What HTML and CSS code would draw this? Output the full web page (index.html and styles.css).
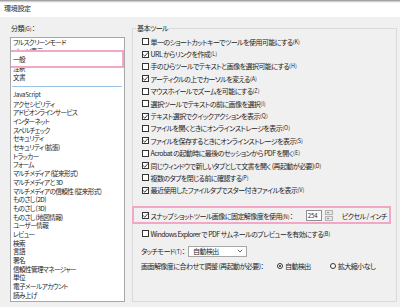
FILE: index.html
```html
<!DOCTYPE html>
<html lang="ja">
<head>
    <meta charset="UTF-8">
    <title>環境設定</title>
    <link rel="stylesheet" href="styles.css">
</head>
<body>

<div class="titlebar">環境設定</div>

<div class="main">
    <div class="side">
        <div class="side-label">分類<span class="key">(G)</span>：</div>
        <div class="listbox">
            <div class="item">フルスクリーンモード</div>
            <div class="item">ページ表示</div>
            <div class="item current">一般</div>
            <div class="item">注釈</div>
            <div class="item">文書</div>
            <div class="sep"></div>
            <div class="item latin">JavaScript</div>
            <div class="item">アクセシビリティ</div>
            <div class="item">アドビオンラインサービス</div>
            <div class="item">インターネット</div>
            <div class="item">スペルチェック</div>
            <div class="item">セキュリティ</div>
            <div class="item">セキュリティ (拡張)</div>
            <div class="item">トラッカー</div>
            <div class="item">フォーム</div>
            <div class="item">マルチメディア (従来形式)</div>
            <div class="item">マルチメディアと 3D</div>
            <div class="item">マルチメディアの信頼性 (従来形式)</div>
            <div class="item">ものさし (2D)</div>
            <div class="item">ものさし (3D)</div>
            <div class="item">ものさし (地図情報)</div>
            <div class="item">ユーザー情報</div>
            <div class="item">レビュー</div>
            <div class="item">検索</div>
            <div class="item">言語</div>
            <div class="item">署名</div>
            <div class="item">信頼性管理マネージャー</div>
            <div class="item">単位</div>
            <div class="item">電子メールアカウント</div>
            <div class="item">読み上げ</div>
        </div>
    </div>

    <fieldset class="group">
        <legend>基本ツール</legend>

        <div class="opt"><span class="cb"></span>単一のショートカットキーでツールを使用可能にする<span class="key">(K)</span></div>
        <div class="opt"><span class="cb checked"><svg viewBox="0 0 7 7"><path d="M1.2 3.6 L2.8 5.2 L5.9 1.6" /></svg></span>URL からリンクを作成<span class="key">(L)</span></div>
        <div class="opt"><span class="cb"></span>手のひらツールでテキストと画像を選択可能にする<span class="key">(H)</span></div>
        <div class="opt"><span class="cb checked"><svg viewBox="0 0 7 7"><path d="M1.2 3.6 L2.8 5.2 L5.9 1.6" /></svg></span>アーティクルの上でカーソルを変える<span class="key">(A)</span></div>
        <div class="opt"><span class="cb"></span>マウスホイールでズームを可能にする<span class="key">(Z)</span></div>
        <div class="opt"><span class="cb"></span>選択ツールでテキストの前に画像を選択<span class="key">(I)</span></div>
        <div class="opt"><span class="cb checked"><svg viewBox="0 0 7 7"><path d="M1.2 3.6 L2.8 5.2 L5.9 1.6" /></svg></span>テキスト選択でクイックアクションを表示<span class="key">(Q)</span></div>
        <div class="opt"><span class="cb"></span>ファイルを開くときにオンラインストレージを表示<span class="key">(O)</span></div>
        <div class="opt"><span class="cb checked"><svg viewBox="0 0 7 7"><path d="M1.2 3.6 L2.8 5.2 L5.9 1.6" /></svg></span>ファイルを保存するときにオンラインストレージを表示<span class="key">(S)</span></div>
        <div class="opt"><span class="cb"></span>Acrobat の起動時に最後のセッションから PDF を開く<span class="key">(E)</span></div>
        <div class="opt"><span class="cb checked"><svg viewBox="0 0 7 7"><path d="M1.2 3.6 L2.8 5.2 L5.9 1.6" /></svg></span>同じウィンドウで新しいタブとして文書を開く (再起動が必要)<span class="key">(D)</span></div>
        <div class="opt"><span class="cb"></span>複数のタブを閉じる前に確認する<span class="key">(P)</span></div>
        <div class="opt"><span class="cb checked"><svg viewBox="0 0 7 7"><path d="M1.2 3.6 L2.8 5.2 L5.9 1.6" /></svg></span>最近使用したファイルタブでスター付きファイルを表示<span class="key">(V)</span></div>

        <div class="opt snap">
            <span class="cb checked"><svg viewBox="0 0 7 7"><path d="M1.2 3.6 L2.8 5.2 L5.9 1.6" /></svg></span>
            <span class="snap-label">スナップショットツール画像に固定解像度を使用<span class="key">(N)</span>：</span>
            <span class="spin"><span class="spin-value">254</span></span>
            <span class="spin-btns"><span class="up"></span><span class="down"></span></span>
            <span class="unit">ピクセル / インチ</span>
        </div>

        <div class="opt explorer"><span class="cb"></span>Windows Explorer で PDF サムネールのプレビューを有効にする<span class="key">(B)</span></div>

        <div class="opt touch">
            <span class="touch-label">タッチモード<span class="key">(T)</span>：</span>
            <span class="select">自動検出<svg class="chev" viewBox="0 0 6 4"><path d="M0.8 0.8 L3 3 L5.2 0.8" /></svg></span>
        </div>

        <div class="opt scale">
            <span class="scale-label">画面解像度に合わせて調整 (再起動が必要)：</span>
            <span class="radio on"></span><span>自動検出</span>
            <span class="radio second"></span><span>拡大縮小なし</span>
        </div>
    </fieldset>
</div>

</body>
</html>
```

FILE: styles.css
```css
html, body {
    margin: 0;
    padding: 0;
}
body {
    width: 400px;
    height: 307px;
    overflow: hidden;
    background-color: #f0f0f0;
    font-family: "Noto Sans CJK JP", "Noto Sans", sans-serif;
    font-feature-settings: "palt";
    font-size: 7px;
    color: #1e1e1e;
}
.titlebar {
    height: 17px;
    line-height: 17px;
    padding-left: 4px;
    background: linear-gradient(#8c8c8c, #e6e6e6 2px, #ffffff 3px);
    letter-spacing: -0.3px;
}
.key {
    font-size: 5.5px;
    letter-spacing: 0;
}
.main {
    display: flex;
    padding-top: 7px;
}

/* 左の分類リスト */
.side {
    width: 125px;
    padding-left: 10px;
    box-sizing: border-box;
}
.side-label {
    line-height: 9px;
    height: 9px;
    margin-left: 1px;
    margin-bottom: 4px;
    letter-spacing: -0.4px;
}
.listbox {
    height: 265px;
    box-sizing: border-box;
    background-color: #ffffff;
    border: 1px solid #a8a8a8;
    padding: 0 0 0 2px;
    overflow: hidden;
    font-size: 6.6px;
    letter-spacing: -0.6px;
}
.listbox .item {
    line-height: 8.7px;
    height: 8.7px;
    white-space: nowrap;
}
.listbox .latin {
    font-size: 6px;
    letter-spacing: -0.2px;
}
.listbox .current {
    position: relative;
    z-index: 1;
}
.listbox .current::before {
    content: "";
    position: absolute;
    left: -10px;
    top: -5px;
    width: 121px;
    height: 18px;
    box-sizing: border-box;
    border: 2px solid #f3a7c7;
    background-color: #ffffff;
    z-index: -1;
}
.listbox .sep {
    height: 1px;
    margin: 4.5px 2px 4px -1px;
    background-color: #9cc2e4;
}

/* 右の基本ツール */
.group {
    margin: 0 0 0 7px;
    width: 265px;
    height: 278px;
    box-sizing: border-box;
    border: 1px solid #dadada;
    padding: 2.5px 0 0 9px;
    letter-spacing: -0.55px;
}
.group legend {
    padding: 0 1px;
    margin-left: -6px;
    line-height: 9px;
}
.opt {
    height: 12.4px;
    display: flex;
    align-items: center;
    white-space: nowrap;
}
.cb {
    flex: none;
    width: 7px;
    height: 7px;
    box-sizing: border-box;
    border: 1px solid #333333;
    background-color: #ffffff;
    margin-right: 1.5px;
    position: relative;
}
.cb svg {
    position: absolute;
    left: -1px;
    top: -1px;
    width: 7px;
    height: 7px;
}
.cb svg path {
    fill: none;
    stroke: #222222;
    stroke-width: 0.9;
}

.snap {
    margin-top: 11.3px;
    height: 16px;
    position: relative;
}
.snap::after {
    content: "";
    position: absolute;
    left: -10px;
    top: -2px;
    width: 259px;
    height: 18px;
    box-sizing: border-box;
    border: 2px solid #f3a7c7;
}
.spin {
    width: 16px;
    height: 11px;
    box-sizing: border-box;
    margin-left: 13px;
    border: 1px solid #8f8f8f;
    background-color: #ffffff;
    font-size: 6px;
    line-height: 9px;
    padding-left: 1px;
    letter-spacing: 0;
}
.spin-btns {
    display: flex;
    flex-direction: column;
    width: 8px;
    height: 11px;
    margin-left: 3px;
    gap: 1px;
}
.spin-btns span {
    flex: 1;
    background-color: #e6e6e6;
    border: 1px solid #b4b4b4;
    position: relative;
}
.spin-btns .up::after,
.spin-btns .down::after {
    content: "";
    position: absolute;
    left: 1.5px;
    border-left: 1.5px solid transparent;
    border-right: 1.5px solid transparent;
}
.spin-btns .up::after {
    top: 1px;
    border-bottom: 1.5px solid #333333;
}
.spin-btns .down::after {
    top: 1px;
    border-top: 1.5px solid #333333;
}
.unit {
    margin-left: 9px;
}

.explorer {
    margin-top: 4px;
    height: 12px;
}
.touch {
    margin-top: 4.5px;
    height: 14px;
}
.touch-label {
    width: 47px;
    margin-left: -1px;
}
.select {
    width: 59px;
    height: 11px;
    box-sizing: border-box;
    border: 1px solid #a6a6a6;
    background-color: #ffffff;
    padding-left: 4px;
    line-height: 9px;
    display: flex;
    align-items: center;
    justify-content: space-between;
}
.chev {
    width: 6px;
    height: 4px;
    margin-right: 3px;
}
.chev path {
    fill: none;
    stroke: #444444;
    stroke-width: 0.8;
}
.scale {
    margin-top: 2px;
    height: 12px;
}
.scale-label {
    width: 136px;
    margin-left: -1px;
}
.radio {
    flex: none;
    width: 6px;
    height: 6px;
    box-sizing: border-box;
    border: 1px solid #333333;
    border-radius: 50%;
    background-color: #ffffff;
    margin-right: 2px;
    position: relative;
}
.radio.on::after {
    content: "";
    position: absolute;
    left: 1px;
    top: 1px;
    width: 2px;
    height: 2px;
    border-radius: 50%;
    background-color: #222222;
}
.radio.second {
    margin-left: 19px;
}
```
